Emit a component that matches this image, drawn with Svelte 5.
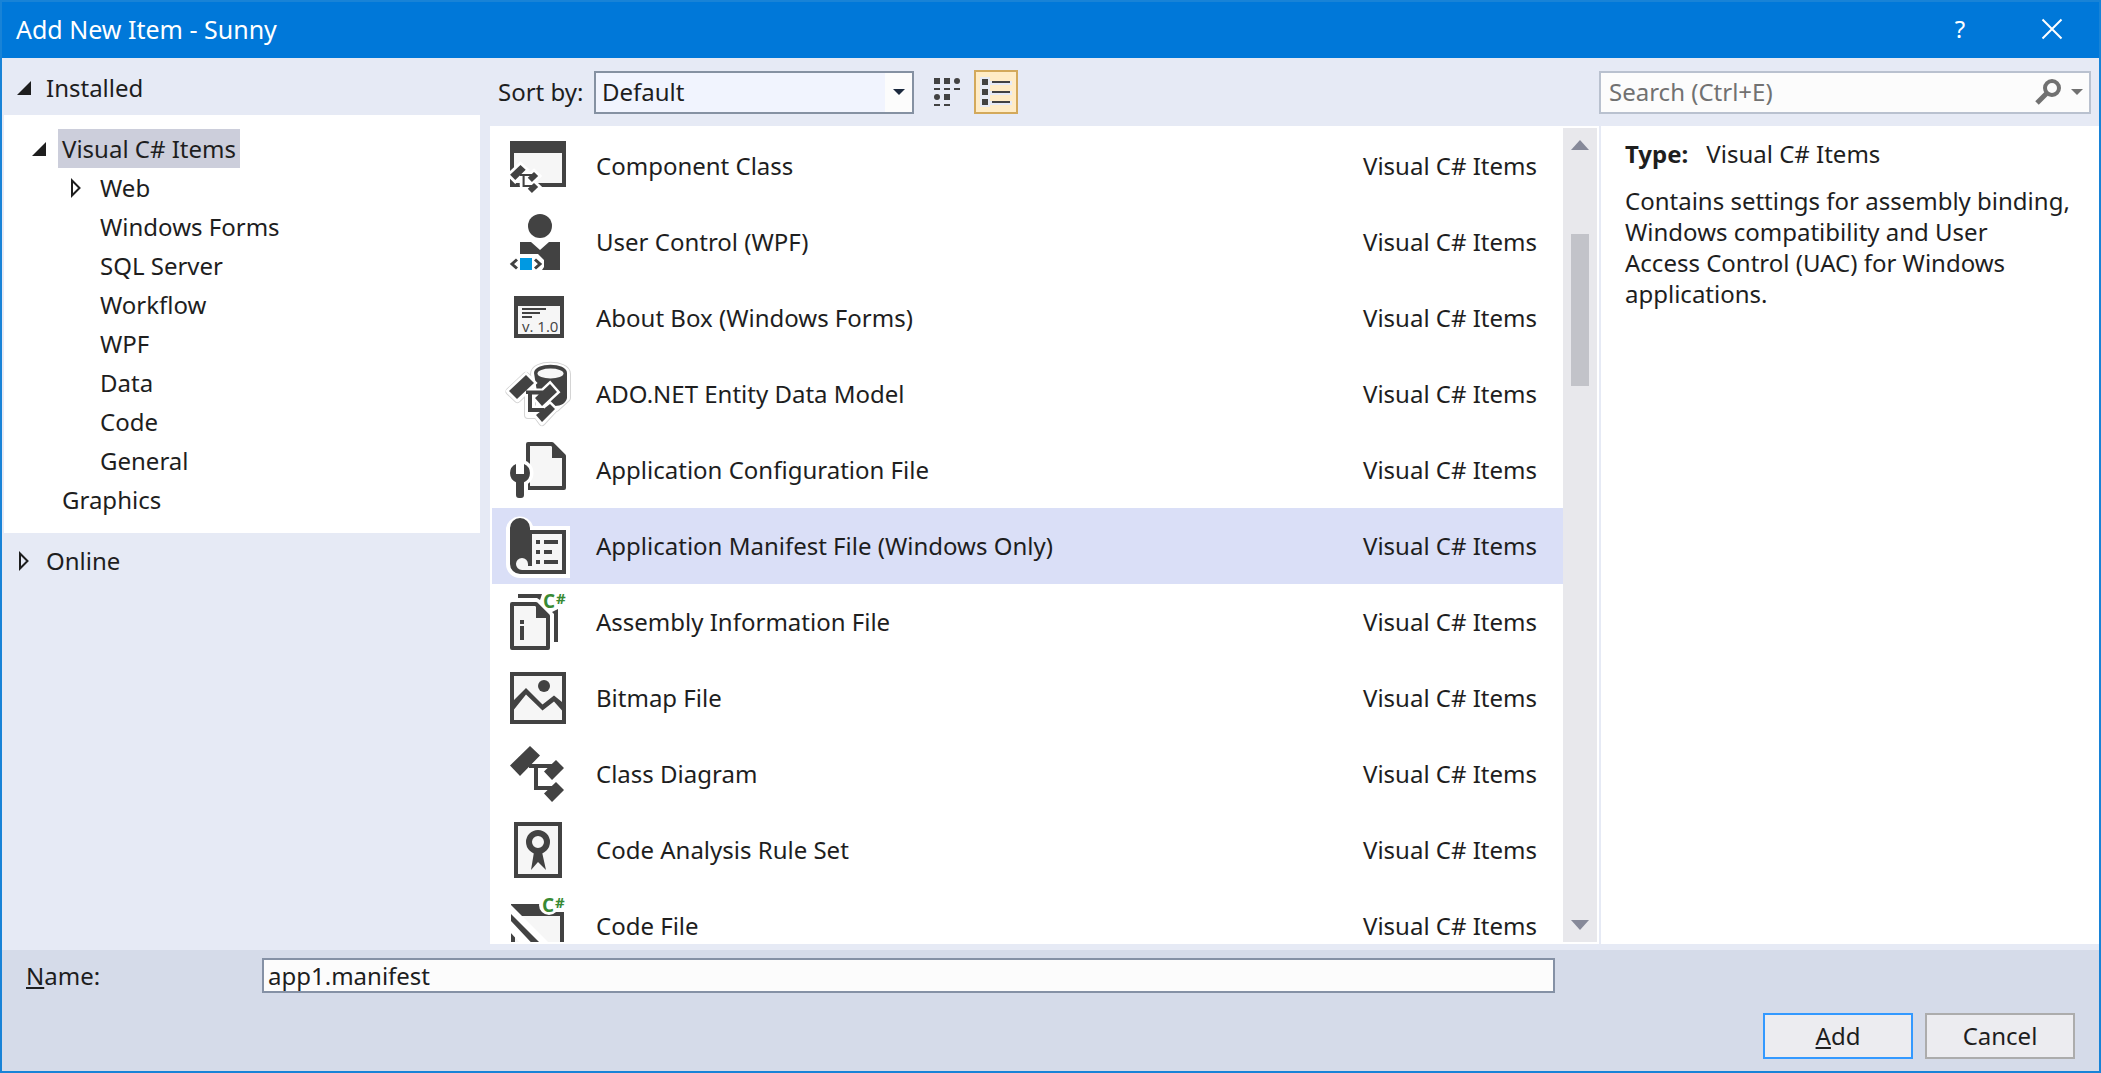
<script>
  const categories = ['Windows Forms', 'SQL Server', 'Workflow', 'WPF', 'Data', 'Code', 'General'];

  const templates = [
    { icon: 'component', name: 'Component Class' },
    { icon: 'user', name: 'User Control (WPF)' },
    { icon: 'about', name: 'About Box (Windows Forms)' },
    { icon: 'entity', name: 'ADO.NET Entity Data Model' },
    { icon: 'config', name: 'Application Configuration File' },
    { icon: 'manifest', name: 'Application Manifest File (Windows Only)' },
    { icon: 'assembly', name: 'Assembly Information File' },
    { icon: 'bitmap', name: 'Bitmap File' },
    { icon: 'diagram', name: 'Class Diagram' },
    { icon: 'ruleset', name: 'Code Analysis Rule Set' },
    { icon: 'code', name: 'Code File' }
  ];

  let selected = $state(5);
  let fileName = $state('app1.manifest');
  let sort = $state('Default');
  let query = $state('');
</script>

{#snippet opened()}
  <svg class="tri" width="14" height="14" viewBox="0 0 14 14" aria-hidden="true"><path d="M14 0V14H0Z" fill="#1e1e1e" /></svg>
{/snippet}

{#snippet closed()}
  <svg class="tri" width="14" height="20" viewBox="0 0 14 20" aria-hidden="true"><path d="M3 2.5V17.500L10.500 10Z" fill="none" stroke="#1e1e1e" stroke-width="2" /></svg>
{/snippet}

{#snippet tree()}
  <path d="M4 23.500 24 4 34 13.500 14 34ZM23 22H50V26H32V44H46V48H28V26H23ZM38 29.500 50 18 58 26 46 38ZM38 51.500 50 40 58 48 46 60Z" />
{/snippet}

{#snippet glyph(kind)}
  <svg class="glyph" width="64" height="64" viewBox="0 0 64 64" fill="#424242" aria-hidden="true">
    {#if kind === 'component'}
      <path d="M4 7H60V53H4Z" />
      <path d="M8 19H56V49H8Z" fill="#f6f6f6" />
      <g transform="translate(2 29) scale(.52 .5)">
        <g stroke="#fff" stroke-width="11" fill="#fff">{@render tree()}</g>
        {@render tree()}
      </g>
      <path d="M4 49 8 53H4ZM10 52 12 50 14 53H9Z" />
    {:else if kind === 'user'}
      <circle cx="34" cy="16" r="12" />
      <path d="M14 32H25L34 40 43 32H54V60H36L38 57V50L32 44H14Z" />
      <path d="M14 48H26V60H14Z" fill="#0099e2" />
      <path d="M11 49.500 6 54 11 58.500M29 49.500 34 54 29 58.500" fill="none" stroke="#424242" stroke-width="3" />
    {:else if kind === 'about'}
      <path d="M8 10H58V52H8Z" />
      <path d="M12 20H54V48H12Z" fill="#f6f6f6" />
      <path d="M16 22H40V24H16ZM16 26H34V28H16ZM16 30H26V32H16Z" />
      <text x="16" y="46" font-size="15">v. 1.0</text>
    {:else if kind === 'entity'}
      <g stroke-linejoin="round">
        <path d="M3.500 29.500 20 14 28 21 11.500 37ZM22 30H26V48H36V42L44 43 48 47 36 60 31 53H22ZM28 12C28 1 61 1 61 12V36L50 46 32 36Z" fill="#fff" stroke="#d4d4d4" stroke-width="8" />
        <path d="M3.500 29.500 20 14 28 21 11.500 37ZM22 30H26V48H36V42L44 43 48 47 36 60 31 53H22ZM28 12C28 1 61 1 61 12V36L50 46 32 36Z" fill="#fff" stroke="#fff" stroke-width="6" />
      </g>
      <path d="M28 11C28 0 61 0 61 11V36C60 41 55 44 49 44L32 36Z" />
      <ellipse cx="44.500" cy="11.500" rx="13" ry="5" fill="#f6f6f6" />
      <path d="M3 29 20 13 28 21 11 37ZM22 29H42V32H26V46H38V50H22ZM29 36 44 22 51 30 36 44ZM30 53 44 42 49 47 36 60Z" fill="#fff" stroke="#fff" stroke-width="5" />
      <path d="M3 29 20 13 28 21 11 37ZM20 28.500H42V32.500H26V46H38V50H22V32H20ZM29 36 44 22 51 30 36 44ZM30 53 44 42 49 47 36 60Z" />
    {:else if kind === 'config'}
      <path d="M22 6H46L58 18V50H22Z" fill="#f6f6f6" stroke="#424242" stroke-width="4" stroke-linejoin="round" />
      <path d="M46 5 60 19V20H46Z" />
      <circle cx="14" cy="35" r="13.500" fill="#fff" />
      <path d="M6 40H22V60H6Z" fill="#fff" />
      <path d="M10 25.900V36H18V25.900A10 10 0 0 1 18 44.200V57A3 3 0 0 1 15 60H13A3 3 0 0 1 10 57V44.200A10 10 0 0 1 10 25.900Z" />
    {:else if kind === 'manifest'}
      <path d="M0 14A14 14 0 0 1 27 12H64V64H14A14 14 0 0 1 0 50Z" fill="#fff" />
      <path d="M4 14A10 10 0 0 1 24 14V16H60V60H14A10 10 0 0 1 4 50Z" />
      <path d="M26 20H56V56H16A6 6 0 1 1 22 50V52H26Z" fill="#f6f6f6" />
      <path d="M30 26H34V30H30ZM38 26H52V30H38ZM30 36H34V40H30ZM38 36H46V40H38ZM30 46H34V50H30ZM38 46H52V50H38Z" />
    {:else if kind === 'assembly'}
      <path d="M12 4H36L34 10 31 8H12ZM46 22 52 19V52H48V24Z" />
      <path d="M6 14H30L42 26V58H6Z" fill="#f6f6f6" stroke="#424242" stroke-width="4" stroke-linejoin="round" />
      <path d="M30 13 44 27V28H30ZM14 30H18V34H14ZM14 36H18V50H14Z" />
      <text class="cs" x="37" y="18" font-size="19">C</text>
      <text class="cs" x="50" y="14" font-size="15">#</text>
    {:else if kind === 'bitmap'}
      <path d="M6 8H58V56H6Z" fill="#f6f6f6" stroke="#424242" stroke-width="4" />
      <circle cx="38" cy="20" r="6" />
      <path d="M8 34 20 22 36.500 38.500 48 29.500 56 36V44.500L48 35.500 36.500 44.500 20 28.500 8 43.500Z" />
    {:else if kind === 'diagram'}
      {@render tree()}
    {:else if kind === 'ruleset'}
      <path d="M10 6H54V58H10Z" fill="#f6f6f6" stroke="#424242" stroke-width="4" />
      <circle cx="32" cy="24" r="9" fill="none" stroke="#424242" stroke-width="6" />
      <path d="M28 34H36L40 52 32 44 25 52Z" />
    {:else if kind === 'code'}
      <path d="M5 10H58V60H5Z" />
      <path d="M9 22H54V60H9Z" fill="#f6f6f6" />
      <path d="M4 10 54 60H42L4 22Z" fill="#fff" />
      <path d="M4 25 38 60H24L4 38Z" fill="#fff" />
      <path d="M5 20 45 60H36L5 27Z" />
      <circle cx="43" cy="11" r="10" fill="#fff" />
      <path d="M43 4H64V18H43Z" fill="#fff" />
      <text class="cs" x="36" y="18" font-size="19">C</text>
      <text class="cs" x="49" y="14" font-size="15">#</text>
    {/if}
  </svg>
{/snippet}

<div class="dialog" role="dialog" aria-label="Add New Item - Sunny">
  <header>
    <h1>Add New Item - Sunny</h1>
    <button class="caption" aria-label="Help">?</button>
    <button class="caption" aria-label="Close">
      <svg width="20" height="20" viewBox="0 0 20 20" fill="none" stroke="#fff" stroke-width="2"><path d="M.5 .5 19.500 19.500M19.500 .5 .5 19.500" /></svg>
    </button>
  </header>

  <main>
    <nav aria-label="Categories">
      <button class="group">{@render opened()}Installed</button>
      <ul class="tree">
        <li>
          <button class="node root">{@render opened()}<span class="label current">Visual C# Items</span></button>
          <ul>
            <li><button class="node parent">{@render closed()}<span class="label">Web</span></button></li>
            {#each categories as category}
              <li><button class="node leaf"><span class="label">{category}</span></button></li>
            {/each}
          </ul>
        </li>
        <li><button class="node top"><span class="label">Graphics</span></button></li>
      </ul>
      <button class="group online">{@render closed()}Online</button>
    </nav>

    <section class="center">
      <div class="toolbar">
        <label for="sort">Sort by:</label>
        <div class="combo">
          <select id="sort" bind:value={sort}>
            <option>Default</option>
            <option>Name Ascending</option>
            <option>Name Descending</option>
          </select>
          <span class="drop"><svg width="12" height="6" viewBox="0 0 12 6"><path d="M0 0H12L6 6Z" fill="#1b293e" /></svg></span>
        </div>
        <button class="view" aria-label="Small icons">
          <svg width="28" height="28" viewBox="0 0 28 28" fill="#424242">
            <path d="M0 0H6V6H0ZM10 0H16V6H10ZM0 10H6V12H0ZM10 10H16V12H10ZM20 10H26V12H20ZM10 16H16V22H10ZM0 26H6V28H0ZM10 26H16V28H10Z" />
            <circle cx="23" cy="3" r="3" /><circle cx="3" cy="19" r="3" />
          </svg>
        </button>
        <button class="view pressed" aria-label="Medium icons" aria-pressed="true">
          <svg width="32" height="30" viewBox="0 0 32 30" fill="#424242">
            <path d="M0 0H10V4H32V8H10V14H32V18H10V24H32V28H10V30H0Z" fill="#e6eaf5" />
            <path d="M2 2H8V8H2ZM2 12H8V18H2ZM2 22H8V28H2ZM12 4H30V6H12ZM12 14H30V16H12ZM12 24H30V26H12Z" />
          </svg>
        </button>
      </div>
      <div class="listing">
        <div class="items" role="listbox" aria-label="Templates">
          {#each templates as item, i}
            <button class="item" class:selected={i === selected} role="option" aria-selected={i === selected} onclick={() => (selected = i)}>
              {@render glyph(item.icon)}
              <span class="name">{item.name}</span>
              <span>Visual C# Items</span>
            </button>
          {/each}
        </div>
        <div class="scroll" aria-hidden="true">
          <svg width="18" height="10" viewBox="0 0 18 10"><path d="M9 0 18 10H0Z" fill="#868999" /></svg>
          <div class="track"><div class="thumb"></div></div>
          <svg width="18" height="10" viewBox="0 0 18 10"><path d="M0 0H18L9 10Z" fill="#868999" /></svg>
        </div>
      </div>
    </section>

    <aside>
      <div class="searchrow">
        <div class="search">
          <input type="text" aria-label="Search" placeholder="Search (Ctrl+E)" bind:value={query} />
          <button class="find" aria-label="Search">
            <svg width="26" height="26" viewBox="0 0 26 26" fill="none" stroke="#717171"><circle cx="17" cy="9" r="7" stroke-width="4" /><path d="M12 14 2 24" stroke-width="5" /></svg>
          </button>
          <button class="find" aria-label="Search options">
            <svg width="12" height="6" viewBox="0 0 12 6"><path d="M0 0H12L6 6Z" fill="#717171" /></svg>
          </button>
        </div>
      </div>
      <div class="details">
        <p><b>Type:</b>Visual C# Items</p>
        <p class="text">Contains settings for assembly binding, Windows compatibility and User Access&nbsp;Control&nbsp;(UAC) for Windows applications.</p>
      </div>
    </aside>
  </main>

  <footer>
    <div class="namerow">
      <label for="name"><u>N</u>ame:</label>
      <input id="name" type="text" bind:value={fileName} />
    </div>
    <div class="actions">
      <button class="primary"><u>A</u>dd</button>
      <button>Cancel</button>
    </div>
  </footer>
</div>

<style>
  .dialog, .dialog :global(*) { box-sizing: border-box; }
  .dialog {
    height: 100vh;
    display: flex;
    flex-direction: column;
    border: 2px solid #1883d7;
    background: #e6eaf5;
    color: #1e1e1e;
    font: 24px/32px "Noto Sans", "Open Sans", sans-serif;
  }
  button, input, select { font: inherit; color: inherit; margin: 0; border-radius: 0; }
  button { padding: 0; border: 0; background: none; text-align: left; }
  ul { list-style: none; margin: 0; padding: 0; }
  svg { display: block; flex: none; overflow: visible; }
  u { text-decoration-thickness: 2px; text-underline-offset: 2px; text-decoration-skip-ink: none; }

  header {
    display: flex;
    flex: none;
    height: 56px;
    align-items: center;
    padding: 0 1px 2px 14px;
    background: #0078d9;
    color: #fff;
  }
  h1 { flex: 1; margin: 0; font: inherit; font-size: 25px; }
  .caption { display: flex; width: 92px; height: 54px; align-items: center; justify-content: center; }

  main { flex: 1; min-height: 0; display: grid; grid-template-columns: 488px minmax(0, 1fr) 500px; padding-bottom: 6px; }

  nav { padding: 0 10px 0 2px; }
  .group { display: flex; align-items: center; gap: 15px; width: 100%; height: 57px; padding: 2px 0 0 13px; }
  .group.online { padding: 0 0 2px 13px; }
  .tree { padding: 14px 0 14px; background: #fff; }
  .node { display: flex; align-items: center; width: 100%; height: 39px; }
  .root { gap: 12px; padding-left: 28px; }
  .parent { gap: 13px; padding-left: 65px; }
  .leaf { padding-left: 92px; }
  .top { padding-left: 54px; }
  .label { padding: 4px 4px 3px; }
  .current { background: #cccedb; }

  .center { display: flex; flex-direction: column; min-width: 0; min-height: 0; }
  .toolbar { display: flex; flex: none; align-items: center; height: 68px; padding-left: 8px; }
  .toolbar label { width: 96px; }
  .combo { display: flex; position: relative; width: 320px; height: 43px; margin-right: 20px; border: 2px solid #8591a2; background: #f1f4fe; }
  select { width: 100%; padding: 0 6px; border: 0; background: none; appearance: none; outline: none; }
  .drop { position: absolute; inset: 0 0 0 auto; width: 27px; display: flex; align-items: center; justify-content: center; background: #fcfcfc; pointer-events: none; }
  .view { display: flex; align-items: center; justify-content: center; height: 44px; }
  .pressed { width: 44px; margin-left: 12px; border: 2px solid #d3a95b; background: #ffecc6; }

  .listing { flex: 1; min-height: 0; display: flex; padding: 2px; background: #fff; }
  .items { flex: 1; min-width: 0; overflow-y: auto; scrollbar-width: none; }
  .item { display: flex; align-items: center; width: 100%; height: 76px; padding: 0 26px 0 14px; }
  .item.selected { background: #dadff7; }
  .glyph { margin-right: 26px; }
  .glyph text { font-family: "Open Sans", "Noto Sans", sans-serif; }
  .glyph .cs { font-weight: 700; fill: #388a34; }
  .name { flex: 1; }
  .scroll { display: flex; flex-direction: column; align-items: center; width: 34px; padding: 12px 0; background: #e8e8ec; }
  .track { flex: 1; width: 18px; padding-top: 84px; }
  .thumb { height: 152px; background: #c2c3c9; }

  aside { display: flex; flex-direction: column; min-height: 0; }
  .searchrow { display: flex; flex: none; align-items: center; height: 68px; padding-right: 8px; }
  .search { display: flex; flex: 1; height: 43px; align-items: center; border: 2px solid #b9c1cf; background: #fcfcfc; }
  .search input { flex: 1; min-width: 0; height: 100%; padding: 0 8px 2px; border: 0; background: none; outline: none; }
  .search input::placeholder { color: #717171; opacity: 1; }
  .find { display: flex; align-items: center; margin-right: 10px; }
  .find:last-child { margin-right: 6px; }
  .details { flex: 1; padding: 12px 24px 0 24px; border-left: 2px solid #e6eaf5; background: #fff; }
  p { margin: 0; }
  b { margin-right: 18px; font-weight: 700; }
  .text { margin-top: 15px; line-height: 31px; }

  footer { flex: none; padding: 8px 24px 12px; background: #d5dbe9; }
  .namerow { display: grid; grid-template-columns: 236px minmax(0, 1fr); width: 1529px; max-width: 100%; align-items: center; }
  #name { height: 35px; padding: 0 4px; border: 2px solid #8591a5; background: #fcfcfc; outline: none; }
  .actions { display: flex; justify-content: flex-end; gap: 12px; margin-top: 20px; }
  .actions button { width: 150px; height: 46px; border: 2px solid #acacac; background: #ececf0; text-align: center; }
  .actions .primary { border-color: #3399ff; }
</style>
